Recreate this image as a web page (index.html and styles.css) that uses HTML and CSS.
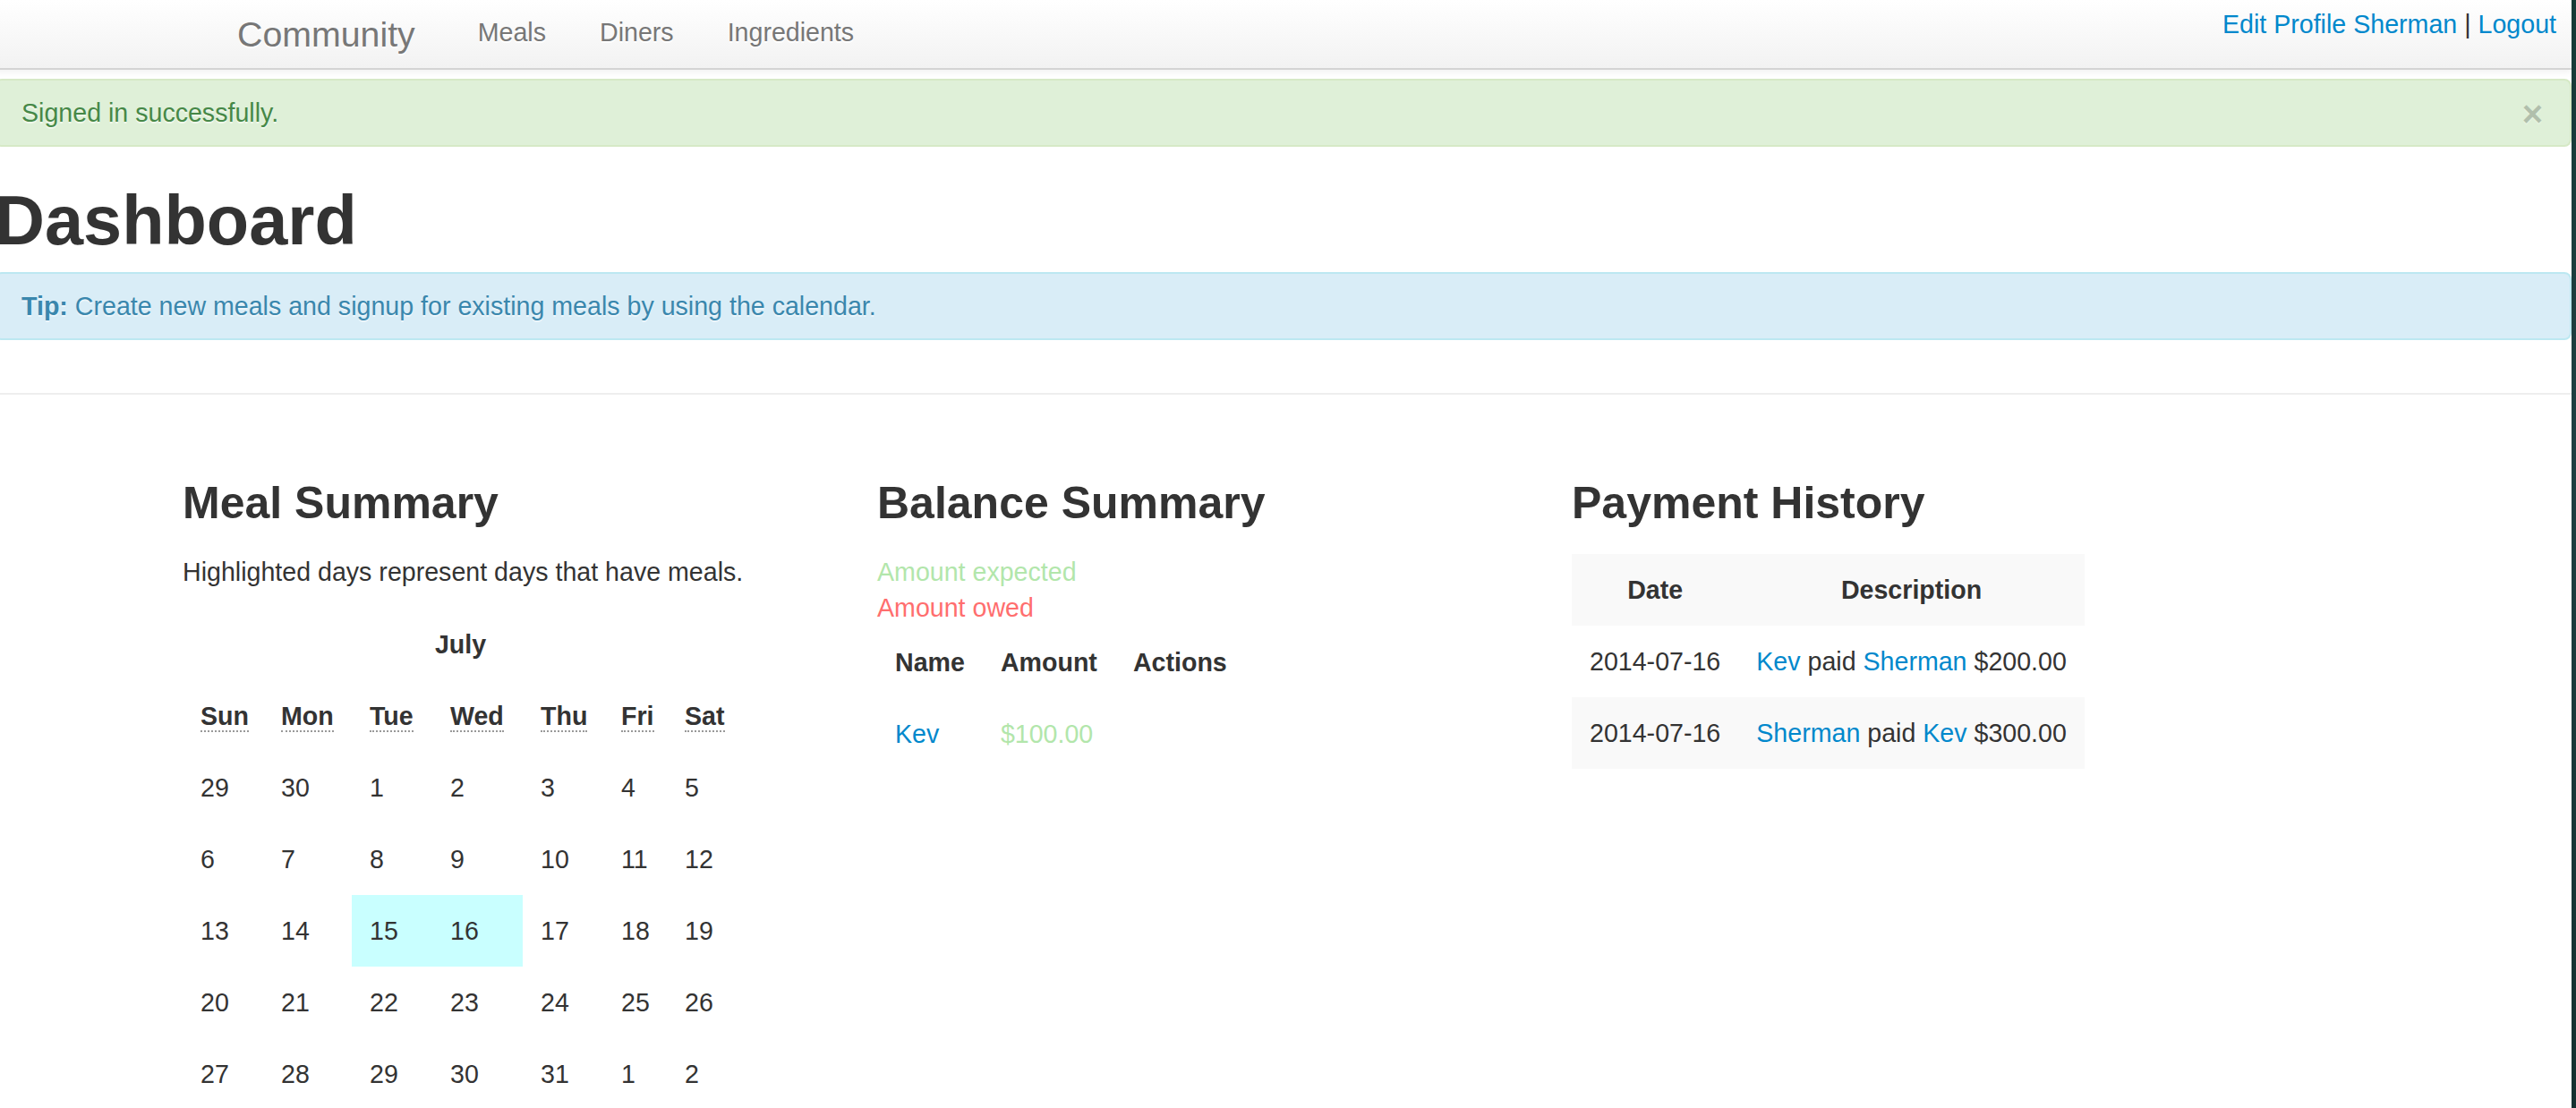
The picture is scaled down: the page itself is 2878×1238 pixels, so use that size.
FILE: index.html
```html
<!DOCTYPE html>
<html lang="en">
<head>
<meta charset="utf-8">
<title>Community - Dashboard</title>
<link rel="stylesheet" href="styles.css">
</head>
<body>
<div class="screen">
  <div class="page">
    <header class="navbar">
      <div class="nav-left">
        <a class="brand" href="#">Community</a>
        <ul class="nav">
          <li><a href="#">Meals</a></li>
          <li><a href="#">Diners</a></li>
          <li><a href="#">Ingredients</a></li>
        </ul>
      </div>
      <div class="user-links"><a href="#">Edit Profile Sherman</a> <span class="sep">|</span> <a href="#">Logout</a></div>
    </header>

    <div class="alert alert-success">
      <span>Signed in successfully.</span>
      <button class="close" type="button">&times;</button>
    </div>

    <h1 class="page-title">Dashboard</h1>

    <div class="alert alert-info"><strong>Tip:</strong> Create new meals and signup for existing meals by using the calendar.</div>

    <hr class="divider">

    <section class="summary">
      <div class="col">
        <h3 class="col-title">Meal Summary</h3>
        <p class="note">Highlighted days represent days that have meals.</p>
        <div class="calendar">
          <div class="month">July</div>
          <table class="cal-table">
            <thead>
              <tr>
                <th><abbr title="Sunday">Sun</abbr></th>
                <th><abbr title="Monday">Mon</abbr></th>
                <th><abbr title="Tuesday">Tue</abbr></th>
                <th><abbr title="Wednesday">Wed</abbr></th>
                <th><abbr title="Thursday">Thu</abbr></th>
                <th><abbr title="Friday">Fri</abbr></th>
                <th><abbr title="Saturday">Sat</abbr></th>
              </tr>
            </thead>
            <tbody>
              <tr><td>29</td><td>30</td><td>1</td><td>2</td><td>3</td><td>4</td><td>5</td></tr>
              <tr><td>6</td><td>7</td><td>8</td><td>9</td><td>10</td><td>11</td><td>12</td></tr>
              <tr><td>13</td><td>14</td><td class="has-meal">15</td><td class="has-meal">16</td><td>17</td><td>18</td><td>19</td></tr>
              <tr><td>20</td><td>21</td><td>22</td><td>23</td><td>24</td><td>25</td><td>26</td></tr>
              <tr><td>27</td><td>28</td><td>29</td><td>30</td><td>31</td><td>1</td><td>2</td></tr>
            </tbody>
          </table>
        </div>
      </div>

      <div class="col">
        <h3 class="col-title">Balance Summary</h3>
        <div class="legend">
          <div class="expected">Amount expected</div>
          <div class="owed">Amount owed</div>
        </div>
        <table class="balance-table">
          <thead>
            <tr><th>Name</th><th>Amount</th><th>Actions</th></tr>
          </thead>
          <tbody>
            <tr><td><a href="#">Kev</a></td><td class="expected">$100.00</td><td></td></tr>
          </tbody>
        </table>
      </div>

      <div class="col">
        <h3 class="col-title">Payment History</h3>
        <table class="payment-table">
          <thead>
            <tr><th>Date</th><th>Description</th></tr>
          </thead>
          <tbody>
            <tr><td>2014-07-16</td><td><a href="#">Kev</a> paid <a href="#">Sherman</a> $200.00</td></tr>
            <tr class="striped"><td>2014-07-16</td><td><a href="#">Sherman</a> paid <a href="#">Kev</a> $300.00</td></tr>
          </tbody>
        </table>
      </div>
    </section>
  </div>
  <div class="desktop-edge"></div>
</div>
</body>
</html>
```

FILE: styles.css
```css
* { box-sizing: border-box; }

html, body {
  margin: 0;
  padding: 0;
  height: 100%;
  overflow: hidden;
}

body {
  font-family: "Liberation Sans", Arial, Helvetica, sans-serif;
  font-size: 28.6px;
  line-height: 40px;
  color: #333333;
  background: #ffffff;
}

a { color: #0088cc; text-decoration: none; }

.screen {
  display: flex;
  height: 1238px;
  overflow: hidden;
}

.page {
  flex: 1;
  margin-left: -6px;
  background: #ffffff;
  min-width: 0;
}

.desktop-edge {
  width: 5px;
  flex: none;
  background: linear-gradient(180deg, #163a36 0%, #1f3f42 40%, #14302f 100%);
}

/* Navbar */
.navbar {
  display: flex;
  justify-content: space-between;
  align-items: flex-start;
  height: 78px;
  padding-left: 231px;
  padding-right: 17px;
  background: linear-gradient(180deg, #ffffff 0%, #f2f2f2 100%);
  border-bottom: 2px solid #d4d4d4;
  box-shadow: 0 2px 8px rgba(0, 0, 0, 0.065);
}

.nav-left {
  display: flex;
  align-items: flex-start;
}

.brand {
  display: block;
  padding: 18px 40px 0;
  font-size: 39.3px;
  line-height: 40px;
  font-weight: 300;
  color: #777777;
  text-shadow: 0 2px 0 #ffffff;
}

.nav {
  display: flex;
  list-style: none;
  margin: 0;
  padding: 0;
}

.nav a {
  display: block;
  padding: 16px 30px 0;
  font-size: 28.6px;
  line-height: 40px;
  color: #777777;
  text-shadow: 0 2px 0 #ffffff;
}

.user-links {
  padding-top: 7px;
  font-size: 28.6px;
  line-height: 40px;
  color: #333333;
}

.user-links .sep { color: #333333; }

/* Alerts */
.alert {
  padding: 16px 70px 16px 28px;
  border: 2px solid;
  border-radius: 8px;
  font-size: 28.6px;
  line-height: 40px;
  text-shadow: 0 2px 0 rgba(255, 255, 255, 0.5);
}

.alert-success {
  position: relative;
  margin-top: 10px;
  background: #dff0d8;
  border-color: #d6e9c6;
  color: #468847;
}

.alert-info {
  margin-top: 18px;
  background: #d9edf7;
  border-color: #bce8f1;
  color: #3a87ad;
}

.close {
  position: absolute;
  right: 30px;
  top: 17px;
  padding: 0;
  border: 0;
  background: transparent;
  font-family: "Liberation Sans", Arial, sans-serif;
  font-size: 40px;
  line-height: 40px;
  font-weight: bold;
  color: #000000;
  opacity: 0.2;
  text-shadow: 0 2px 0 #ffffff;
  cursor: pointer;
}

/* Heading */
.page-title {
  margin: 42px 0 0;
  font-size: 77.5px;
  line-height: 80px;
  font-weight: bold;
  color: #333333;
}

.divider {
  margin: 59px 0 0;
  height: 0;
  border: 0;
  border-top: 2px solid #eeeeee;
}

/* Summary columns */
.summary {
  display: grid;
  grid-template-columns: repeat(3, 736px);
  column-gap: 40px;
  padding-left: 210px;
  padding-top: 81px;
}

.col-title {
  margin: 0 0 17px;
  font-size: 50px;
  line-height: 80px;
  font-weight: bold;
  color: #333333;
}

.note {
  margin: 0;
}

.calendar {
  margin-top: 41px;
  width: 621px;
}

.month {
  text-align: center;
  font-weight: bold;
  padding-bottom: 20px;
}

.cal-table {
  border-collapse: collapse;
  table-layout: fixed;
  width: 621px;
}

.cal-table th,
.cal-table td {
  padding: 20px;
  text-align: left;
  vertical-align: top;
  line-height: 40px;
  white-space: nowrap;
}

.cal-table th:nth-child(1) { width: 90px; }
.cal-table th:nth-child(2) { width: 99px; }
.cal-table th:nth-child(3) { width: 90px; }
.cal-table th:nth-child(4) { width: 101px; }
.cal-table th:nth-child(5) { width: 90px; }
.cal-table th:nth-child(6) { width: 71px; }
.cal-table th:nth-child(7) { width: 80px; }

.cal-table abbr {
  text-decoration: none;
  border-bottom: 2px dotted #999999;
  cursor: help;
}

.cal-table .has-meal {
  background: #c9ffff;
}

/* Balance */
.legend {
  line-height: 40px;
}

.expected { color: #b2e6ab; }
.owed { color: #ff6e6e; }

.balance-table {
  margin-top: 1px;
  border-collapse: collapse;
}

.balance-table th,
.balance-table td {
  padding: 20px;
  text-align: left;
  vertical-align: top;
  line-height: 40px;
}

/* Payment history */
.payment-table {
  margin-top: 9px;
  border-collapse: collapse;
}

.payment-table th,
.payment-table td {
  padding: 20px;
  line-height: 40px;
  vertical-align: top;
  white-space: nowrap;
}

.payment-table th {
  text-align: center;
  background: #f9f9f9;
}

.payment-table td {
  text-align: left;
}

.payment-table .striped td {
  background: #f9f9f9;
}
```
